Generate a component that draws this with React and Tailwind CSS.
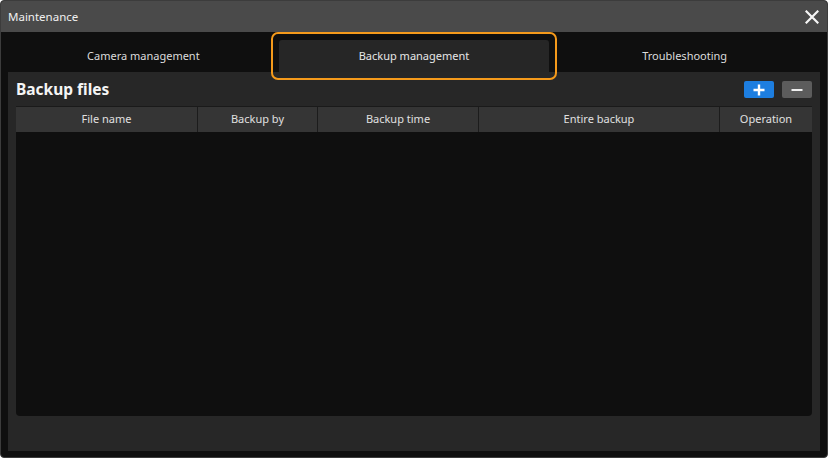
import React from "react";

export default function App() {
  const cols = [
    { name: "File name", w: "w-[182px]" },
    { name: "Backup by", w: "w-[120px]" },
    { name: "Backup time", w: "w-[161px]" },
    { name: "Entire backup", w: "w-[241px]" },
    { name: "Operation", w: "flex-1" },
  ];
  return (
    <div
      className="w-[828px] h-[458px] bg-[#0f0f0f] flex flex-col border border-[#3c3c3c] rounded-[4px] overflow-hidden text-[#e6e6e6]"
      style={{ fontFamily: '"Noto Sans", "Open Sans", sans-serif' }}
    >
      <div className="h-[31px] shrink-0 bg-[#4a4a4a] flex items-center justify-between pl-[7px] pr-[8px]">
        <span className="text-[11.5px] text-[#f0f0f0]">Maintenance</span>
        <svg width="14" height="14" viewBox="0 0 14 14" className="mt-[1px]">
          <path d="M1.5 1.5 L12.5 12.5 M12.5 1.5 L1.5 12.5" stroke="#f5f5f5" strokeWidth="2.2" strokeLinecap="square" />
        </svg>
      </div>
      <div className="flex-1 flex flex-col px-[7px] pt-[8px] pb-[6px]">
        <div className="h-[32px] shrink-0 flex">
          <div className="flex-1 flex items-center justify-center text-[11px] text-[#dcdcdc] pt-[1px]">Camera management</div>
          <div className="flex-1 relative flex items-center justify-center text-[11px] text-[#e6e6e6] bg-[#262626] rounded-t-[3px] pt-[1px]">
            Backup management
            <div className="absolute left-[-8px] right-[-8px] top-[-8px] bottom-[-8px] border-2 border-[#f59a1b] rounded-[7px] z-10 pointer-events-none" />
          </div>
          <div className="flex-1 flex items-center justify-center text-[11px] text-[#dcdcdc] pt-[1px]">Troubleshooting</div>
        </div>
        <div className="flex-1 bg-[#272727] flex flex-col px-[8px] pb-[35px]">
          <div className="h-[34px] shrink-0 flex items-center justify-between">
            <span className="text-[15.5px] font-bold text-[#f5f5f5] mt-[1px]">Backup files</span>
            <div className="flex gap-[8px] mt-[1px]">
              <button className="w-[30px] h-[17px] bg-[#1d7ee0] rounded-[2px] flex items-center justify-center">
                <svg width="12" height="12" viewBox="0 0 12 12">
                  <path d="M6 0.5 V11.5 M0.5 6 H11.5" stroke="#ffffff" strokeWidth="2.4" />
                </svg>
              </button>
              <button className="w-[30px] h-[17px] bg-[#5c5c5c] rounded-[2px] flex items-center justify-center">
                <svg width="12" height="12" viewBox="0 0 12 12">
                  <path d="M0.5 6 H11.5" stroke="#f0f0f0" strokeWidth="2" />
                </svg>
              </button>
            </div>
          </div>
          <div className="flex-1 flex flex-col bg-[#0f0f0f] rounded-b-[4px] overflow-hidden">
            <div className="h-[26px] shrink-0 flex bg-[#353535] border-t border-[#1a1a1a]">
              {cols.map((c, i) => (
                <div
                  key={c.name}
                  className={`${c.w} flex items-center justify-center text-[11px] text-[#e0e0e0] ${i < cols.length - 1 ? "border-r border-[#1c1c1c]" : ""}`}
                >
                  {c.name}
                </div>
              ))}
            </div>
            <div className="flex-1" />
          </div>
        </div>
      </div>
    </div>
  );
}
